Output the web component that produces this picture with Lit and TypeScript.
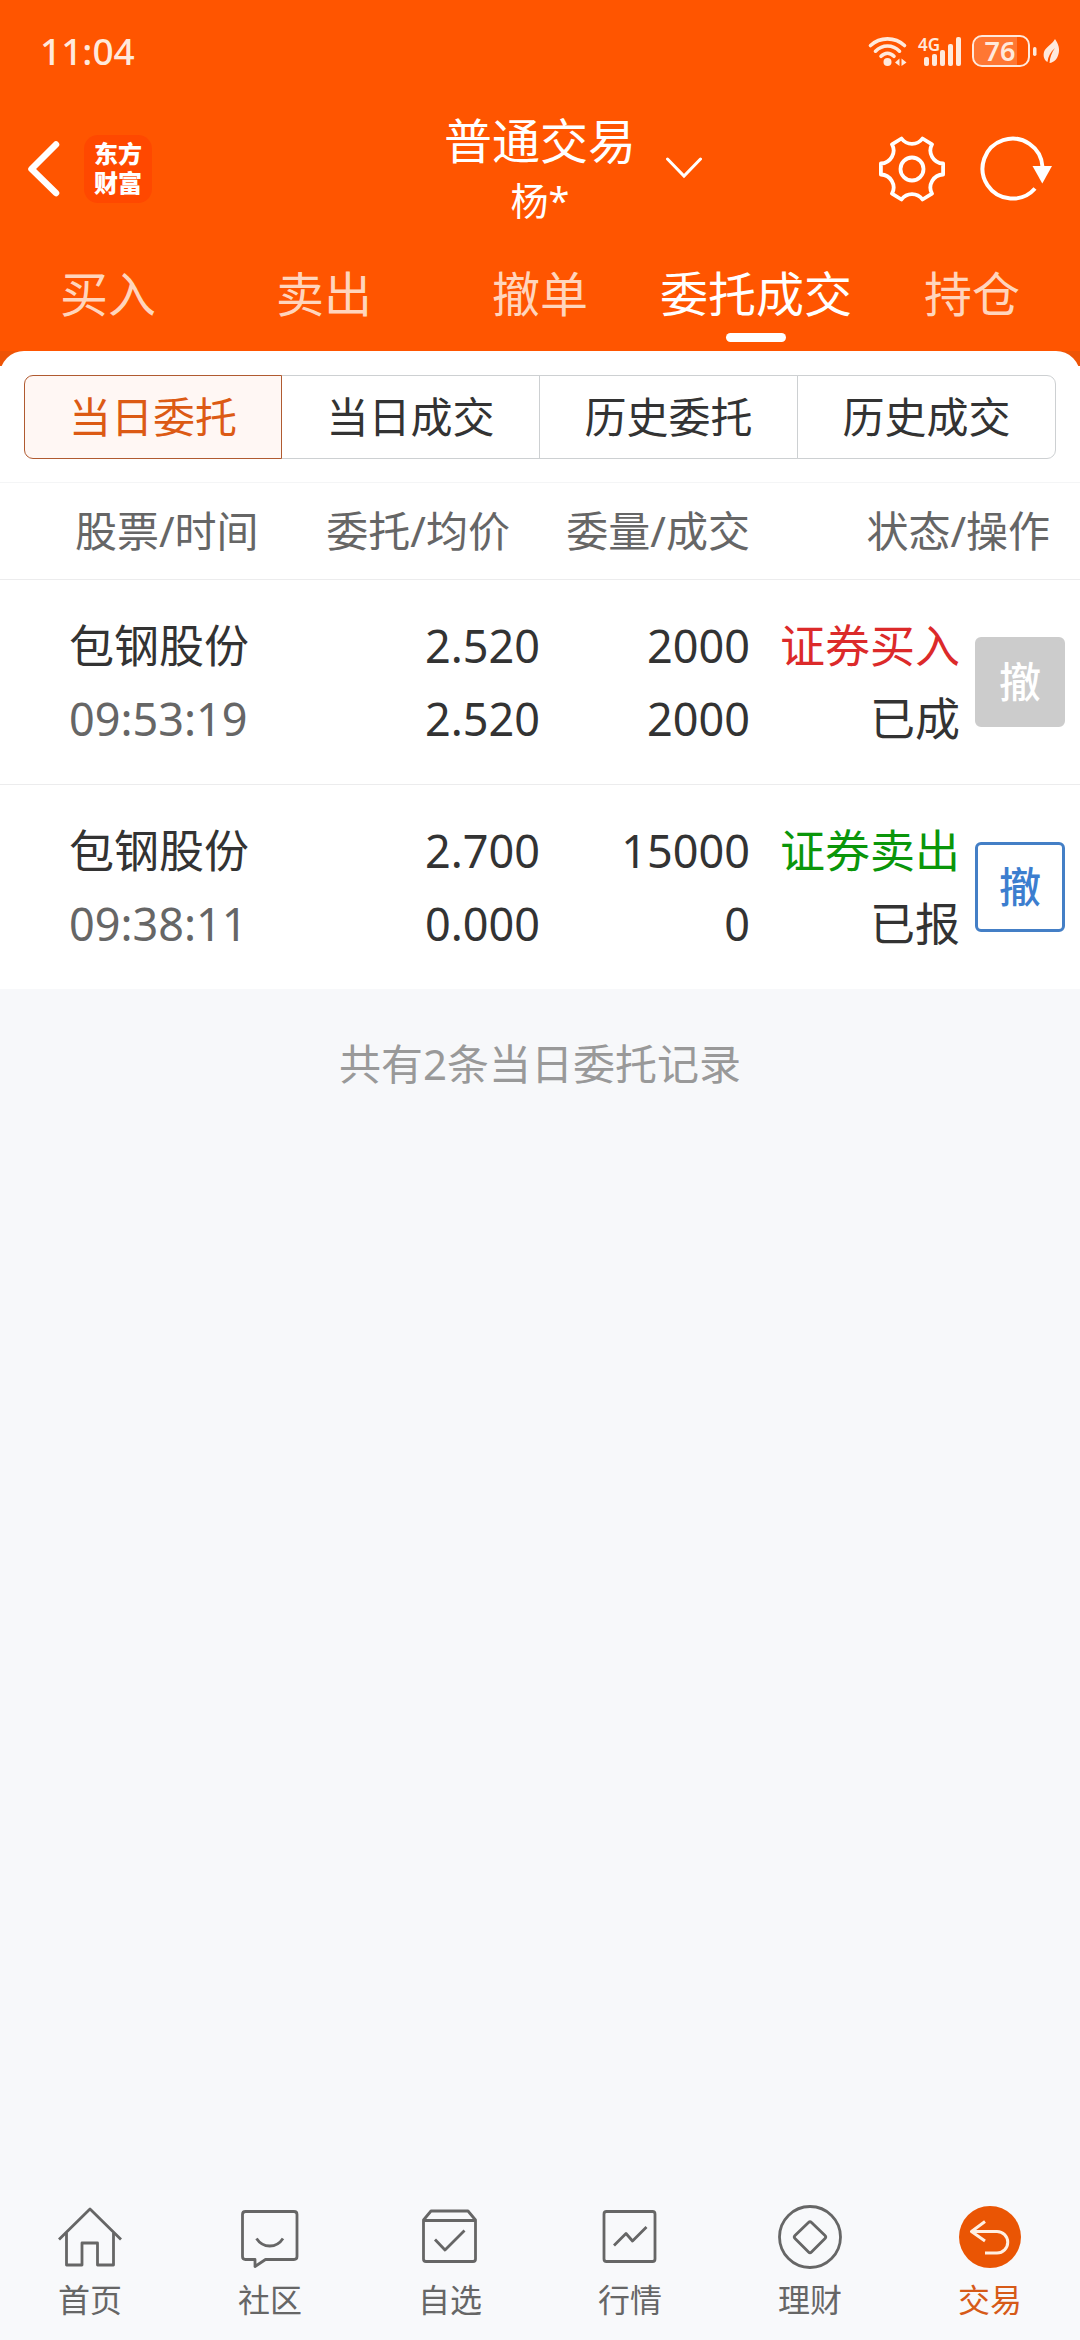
import { LitElement, html, svg, css, nothing } from "lit";
import type { TemplateResult } from "lit";
import { customElement, property, state } from "lit/decorators.js";
import { classMap } from "lit/directives/class-map.js";

const FONT = css`"Noto Sans", "Noto Sans CJK SC", sans-serif`;

interface Order {
  name: string;
  time: string;
  price: string;
  average: string;
  amount: string;
  filled: string;
  side: "buy" | "sell";
  sideLabel: string;
  status: string;
  open: boolean;
}

const ORDERS: Order[] = [
  {
    name: "包钢股份",
    time: "09:53:19",
    price: "2.520",
    average: "2.520",
    amount: "2000",
    filled: "2000",
    side: "buy",
    sideLabel: "证券买入",
    status: "已成",
    open: false,
  },
  {
    name: "包钢股份",
    time: "09:38:11",
    price: "2.700",
    average: "0.000",
    amount: "15000",
    filled: "0",
    side: "sell",
    sideLabel: "证券卖出",
    status: "已报",
    open: true,
  },
];

/* Status bar: clock, wifi, signal, battery */
@customElement("status-bar")
export class StatusBar extends LitElement {
  static styles = css`
    :host {
      display: flex;
      align-items: center;
      justify-content: space-between;
      box-sizing: border-box;
      height: 102px;
      padding: 0 20px 0 40px;
      color: #ffe9dc;
      font-family: ${FONT};
    }
    .clock {
      font-size: 37px;
      font-weight: 500;
      line-height: 52px;
    }
    .icons {
      display: flex;
      align-items: center;
      gap: 10px;
    }
    svg {
      display: block;
      overflow: visible;
    }
    .net {
      font: 600 17px "Noto Sans", sans-serif;
    }
    .level {
      font: 600 27px "Noto Sans", sans-serif;
    }
  `;

  render() {
    return html`
      <time class="clock">11:04</time>
      <div class="icons">
        <svg width="40" height="32" viewBox="0 0 40 32" fill="none" stroke="currentColor" stroke-width="3.6" stroke-linecap="round" aria-hidden="true">
          <path d="M2.5 10.5C12 1.6 27 1.6 36.5 10.5" />
          <path d="M7.5 16.2C14.5 9.3 24.5 9.3 31.5 16.2" />
          <path d="M13 21.3C17 17.3 22 17.3 26 21.3" />
          <circle cx="19.5" cy="27" r="4" fill="currentColor" stroke="none" />
          <path d="M27 27.5L31.5 23.500V31ZM33.500 31V23.500L38.500 27.500Z" fill="currentColor" stroke="none" />
        </svg>
        <svg width="44" height="32" viewBox="0 0 44 32" fill="currentColor" aria-label="4G">
          <text class="net" x="0" y="16">4G</text>
          <rect x="6" y="22" width="5" height="9" rx="2" />
          <rect x="14" y="19" width="5" height="12" rx="2" />
          <rect x="22" y="15" width="5" height="16" rx="2" />
          <rect x="30" y="9" width="5" height="22" rx="2" />
          <rect x="38" y="2" width="5" height="29" rx="2" />
        </svg>
        <svg width="88" height="32" viewBox="0 0 88 32" fill="none" aria-label="76%">
          <path d="M10 2H45V30H10C5 30 2 26 2 21V11C2 6 5 2 10 2Z" fill="#ff7733" />
          <rect x="1" y="1" width="56" height="30" rx="9" stroke="currentColor" stroke-width="2" />
          <text class="level" x="28" y="26" text-anchor="middle" fill="currentColor">76</text>
          <rect x="61" y="12" width="3.5" height="9" rx="1.7" fill="currentColor" />
          <path d="M83 4C86.5 9 88 14 86.5 19C85.3 24 82 27.5 77.5 28C78 22 79.5 18 83 13C78.5 17 76 21.5 75.5 27C72 25 71 21 72 17C73.5 12 80 9.500 83 4Z" fill="currentColor" />
        </svg>
      </div>
    `;
  }
}

/* Title bar and main section tabs */
@customElement("trade-header")
export class TradeHeader extends LitElement {
  @state() private active = 3;
  private tabs = ["买入", "卖出", "撤单", "委托成交", "持仓"];

  static styles = css`
    :host {
      display: block;
      color: #fff;
      font-family: ${FONT};
    }
    button {
      margin: 0;
      padding: 0;
      border: 0;
      background: none;
      color: inherit;
      font: inherit;
      cursor: pointer;
    }
    svg {
      display: block;
    }
    .bar {
      display: grid;
      grid-template-columns: 1fr auto 1fr;
      align-items: center;
      height: 134px;
      padding: 0 28px;
    }
    .left {
      display: flex;
      align-items: center;
      gap: 24px;
    }
    .logo {
      display: grid;
      place-content: center;
      box-sizing: border-box;
      width: 68px;
      height: 68px;
      padding-bottom: 4px;
      border-radius: 14px;
      background: #ff4800;
      font-family: "Noto Sans CJK SC", sans-serif;
      font-size: 24px;
      font-weight: 900;
      line-height: 29px;
      text-align: center;
    }
    .title {
      margin: 0;
      font-size: 48px;
      font-weight: 400;
      line-height: 62px;
      text-align: center;
    }
    .user {
      margin: 0;
      font-size: 38px;
      line-height: 56px;
      text-align: center;
    }
    .right {
      display: flex;
      align-items: center;
      justify-content: space-between;
      padding-left: 28px;
    }
    .actions {
      display: flex;
      gap: 35px;
    }
    .tabs {
      display: grid;
      grid-template-columns: repeat(5, 1fr);
    }
    .tab {
      display: flex;
      flex-direction: column;
      align-items: center;
      gap: 7px;
      padding: 26px 0 9px;
      color: #ffd5bd;
      font-size: 48px;
      line-height: 64px;
      white-space: nowrap;
    }
    .tab::after {
      content: "";
      width: 60px;
      height: 9px;
      border-radius: 5px;
    }
    .tab.on {
      color: #fff;
    }
    .tab.on::after {
      background: #fff;
    }
  `;

  render() {
    return html`
      <div class="bar">
        <div class="left">
          <button aria-label="返回">
            <svg width="32" height="56" viewBox="0 0 32 56" fill="none" stroke="currentColor" stroke-width="6.5" stroke-linecap="round" stroke-linejoin="round">
              <path d="M28 3.5L3.5 28L28 52" />
            </svg>
          </button>
          <div class="logo">东方<br />财富</div>
        </div>
        <div>
          <h1 class="title">普通交易</h1>
          <p class="user">杨*</p>
        </div>
        <div class="right">
          <button aria-label="切换账户">
            <svg width="38" height="24" viewBox="0 0 38 24" fill="none" stroke="currentColor" stroke-width="3" stroke-linecap="round">
              <path d="M3.5 2L20 19L36.5 2" />
            </svg>
          </button>
          <div class="actions">
            <button aria-label="设置">
              <svg width="66" height="66" viewBox="0 0 66 66" fill="none" stroke="currentColor" stroke-width="3.8" stroke-linejoin="round">
                <path d="M22.5 2.500L13 8.300A13 13 0 0 1 1.900 27.500V38.500A13 13 0 0 1 13 57.700L22.500 63.500A13 13 0 0 1 43.500 63.500L53 57.700A13 13 0 0 1 64.100 38.500V27.500A13 13 0 0 1 53 8.300L43.500 2.500A13 13 0 0 1 22.500 2.500Z" />
                <circle cx="33" cy="33" r="11.5" />
              </svg>
            </button>
            <button aria-label="刷新">
              <svg width="72" height="66" viewBox="0 0 72 66" fill="none" stroke="currentColor" stroke-width="4">
                <path d="M62.5 31A30 30 0 1 0 55 52.5" />
                <path d="M52.5 30H72L62.3 47.5Z" fill="currentColor" stroke="none" />
              </svg>
            </button>
          </div>
        </div>
      </div>
      <nav class="tabs">
        ${this.tabs.map(
          (t, i) => html`<button class=${classMap({ tab: true, on: i === this.active })} @click=${() => (this.active = i)}>${t}</button>`
        )}
      </nav>
    `;
  }
}

/* Segmented filter plus the orders table */
@customElement("order-panel")
export class OrderPanel extends LitElement {
  @property({ attribute: false }) orders: Order[] = [];
  @state() private active = 0;
  private segments = ["当日委托", "当日成交", "历史委托", "历史成交"];

  static styles = css`
    :host {
      display: block;
      background: linear-gradient(#ee5406 15px, #fff 15px);
      font-family: ${FONT};
    }
    .card {
      border-radius: 24px 24px 0 0;
      background: #fff;
    }
    .segments {
      display: grid;
      grid-template-columns: repeat(4, 1fr);
      padding: 24px 24px 23px;
      border-bottom: 1px solid #f4f5f6;
    }
    .segment {
      margin: 0 0 0 -1px;
      padding: 0;
      height: 84px;
      border: 1px solid #cdd0d2;
      background: #fff;
      color: #333;
      font: inherit;
      font-size: 42px;
      line-height: 60px;
      cursor: pointer;
    }
    .segment:first-child {
      margin-left: 0;
      border-radius: 9px 0 0 9px;
    }
    .segment:last-child {
      border-radius: 0 9px 9px 0;
    }
    .segment.on {
      z-index: 1;
      border-color: #b05a30;
      background: #fff7f4;
      color: #dc5a14;
    }
    table {
      width: 100%;
      table-layout: fixed;
      border-collapse: collapse;
    }
    .c1 {
      width: 28%;
    }
    .c2 {
      width: 22%;
    }
    .c5 {
      width: 120px;
    }
    th {
      height: 96px;
      padding: 0;
      color: #666;
      font-size: 42px;
      font-weight: 400;
      line-height: 60px;
      text-align: right;
    }
    td {
      height: 204px;
      padding: 0;
      color: #333;
      font-size: 45px;
      line-height: 73px;
      text-align: right;
      white-space: nowrap;
    }
    tr {
      border-bottom: 1px solid #ececed;
    }
    tbody tr:last-child {
      border-bottom: 0;
    }
    th.name {
      padding-left: 75px;
      text-align: left;
    }
    td.name {
      padding-left: 69px;
      text-align: left;
    }
    th.price,
    th.state {
      padding-right: 30px;
    }
    .line {
      display: block;
    }
    .time {
      color: #666;
    }
    .buy {
      color: #dc2a2a;
    }
    .sell {
      color: #0a960a;
    }
    .cancel {
      display: block;
      box-sizing: border-box;
      width: 90px;
      height: 90px;
      margin: 0 15px;
      padding: 0;
      border: 3px solid #447fc6;
      border-radius: 6px;
      background: #fff;
      color: #3c7ecf;
      font: inherit;
      font-size: 42px;
      font-weight: 500;
      line-height: 60px;
      cursor: pointer;
    }
    .cancel:disabled {
      border-color: #ccc;
      background: #ccc;
      color: #fff;
      cursor: default;
    }
  `;

  private row(o: Order) {
    return html`
      <tr>
        <td class="name"><span class="line">${o.name}</span><span class="line time">${o.time}</span></td>
        <td><span class="line">${o.price}</span><span class="line">${o.average}</span></td>
        <td><span class="line">${o.amount}</span><span class="line">${o.filled}</span></td>
        <td><span class="line ${o.side}">${o.sideLabel}</span><span class="line">${o.status}</span></td>
        <td><button class="cancel" ?disabled=${!o.open}>撤</button></td>
      </tr>
    `;
  }

  render() {
    return html`
      <div class="card">
        <div class="segments">
          ${this.segments.map(
            (s, i) => html`<button class=${classMap({ segment: true, on: i === this.active })} @click=${() => (this.active = i)}>${s}</button>`
          )}
        </div>
        <table>
          <colgroup>
            <col class="c1" />
            <col class="c2" />
            <col />
            <col />
            <col class="c5" />
          </colgroup>
          <thead>
            <tr>
              <th class="name" scope="col">股票/时间</th>
              <th class="price" scope="col">委托/均价</th>
              <th scope="col">委量/成交</th>
              <th class="state" scope="col" colspan="2">状态/操作</th>
            </tr>
          </thead>
          <tbody>
            ${this.orders.map((o) => this.row(o))}
          </tbody>
        </table>
      </div>
    `;
  }
}

interface NavItem {
  label: string;
  icon: TemplateResult<2>;
  on?: boolean;
}

const NAV: NavItem[] = [
  {
    label: "首页",
    icon: svg`<path d="M2 35.5L33 5L64 35.5" /><path d="M9.5 29V61H25V39H40.5V61H56.5V29" />`,
  },
  {
    label: "社区",
    icon: svg`<path d="M8.5 7.5H57Q60 7.5 60 10.5V52.5Q60 55.5 57 55.5H28.5L18 62.5V55.5H8.5Q5.5 55.5 5.5 52.5V10.5Q5.5 7.5 8.5 7.5Z" /><path d="M19.5 34.5C26 44.5 39.5 44.5 46 34.5" />`,
  },
  {
    label: "自选",
    icon: svg`<path d="M6.5 16L14 7H51L58.5 16V55Q58.5 57.5 56 57.5H9Q6.5 57.5 6.5 55ZM6.5 16.5H58.5" /><path d="M18 35.5L28 46L47.5 26.5" />`,
  },
  {
    label: "行情",
    icon: svg`<rect x="7" y="7.5" width="51" height="50" rx="2.5" /><path d="M17 41.5L29 29.5L35.5 37L49.5 23" />`,
  },
  {
    label: "理财",
    icon: svg`<circle cx="33" cy="33" r="30.5" /><path d="M31.5 18.5Q33 17 34.5 18.5L48 31.5Q49.5 33 48 34.5L34.5 48Q33 49.5 31.5 48L18 34.5Q16.5 33 18 31.5Z" />`,
  },
  {
    label: "交易",
    on: true,
    icon: svg`<circle cx="33" cy="33" r="31" fill="#ea5504" stroke="none" /><path d="M28 17.5L14.5 27.5L28 37M14.5 27.5H40A10.7 10.7 0 0 1 40 49H28" stroke="#ffefe2" stroke-width="3" />`,
  },
];

/* Bottom navigation */
@customElement("bottom-nav")
export class BottomNav extends LitElement {
  static styles = css`
    :host {
      display: block;
      background: #f8f9fb;
      font-family: ${FONT};
    }
    nav {
      display: grid;
      grid-template-columns: repeat(6, 1fr);
      padding: 14px 0 18px;
    }
    a {
      display: flex;
      flex-direction: column;
      align-items: center;
      gap: 8px;
      color: #666;
      font-size: 32px;
      line-height: 44px;
      text-decoration: none;
    }
    a.on {
      color: #d65a18;
    }
  `;

  render() {
    return html`
      <nav>
        ${NAV.map(
          (n) => html`
            <a href="#" class=${classMap({ on: !!n.on })} aria-current=${n.on ? "page" : nothing}>
              <svg width="66" height="66" viewBox="0 0 66 66" fill="none" stroke="#666" stroke-width="2.8" stroke-linejoin="round" aria-hidden="true">${n.icon}</svg>
              <span>${n.label}</span>
            </a>
          `
        )}
      </nav>
    `;
  }
}

@customElement("app-root")
export class AppRoot extends LitElement {
  static styles = css`
    :host {
      display: flex;
      flex-direction: column;
      min-height: 100vh;
      background: #f7f8fa;
      font-family: ${FONT};
    }
    .top {
      background: #ff5500;
    }
    .summary {
      flex: 1;
      margin: 0;
      padding-top: 45px;
      color: #999;
      font-size: 42px;
      line-height: 60px;
      text-align: center;
    }
  `;

  render() {
    return html`
      <header class="top">
        <status-bar></status-bar>
        <trade-header></trade-header>
      </header>
      <order-panel .orders=${ORDERS}></order-panel>
      <p class="summary">共有${ORDERS.length}条当日委托记录</p>
      <bottom-nav></bottom-nav>
    `;
  }
}
